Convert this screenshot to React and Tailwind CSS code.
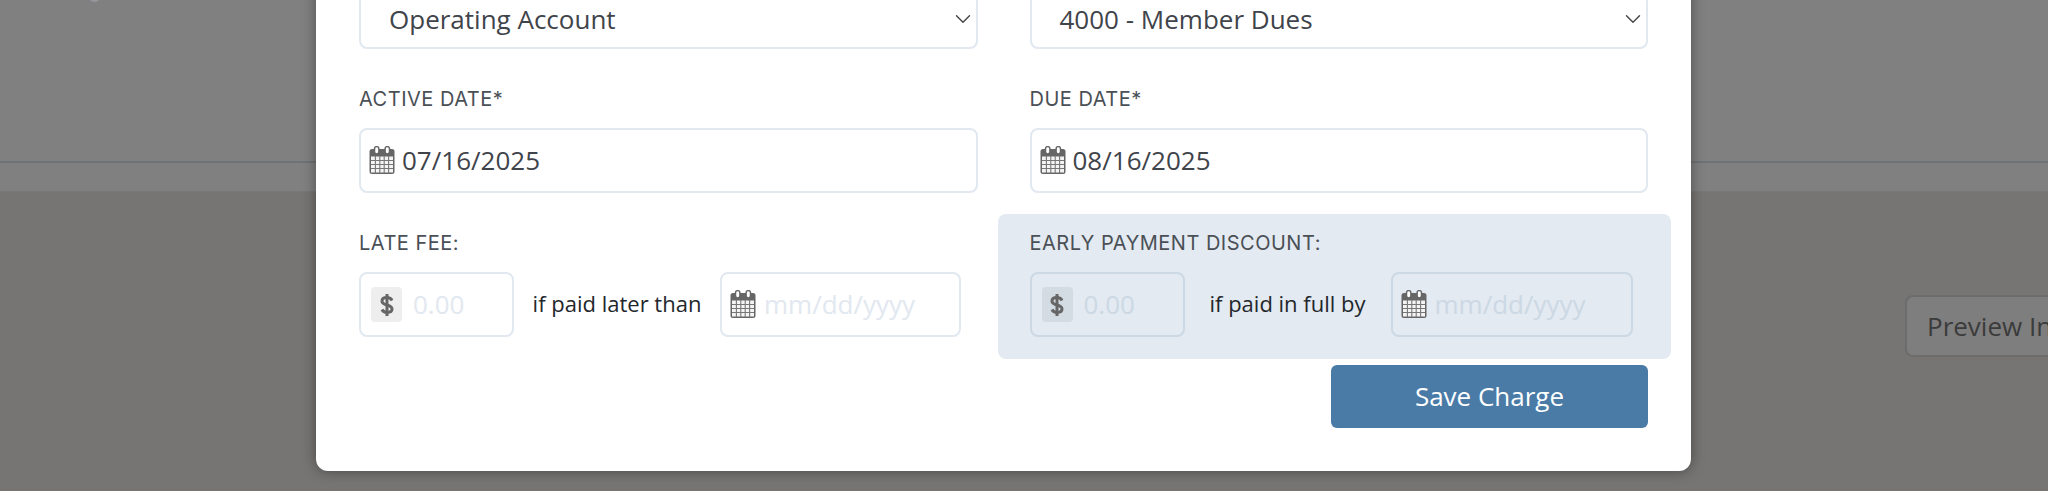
import React from "react";
import { LuChevronDown } from "react-icons/lu";

const sans = "font-['Open_Sans',sans-serif]";
const label = "font-['Inter',sans-serif] text-[20px] leading-[24px] text-[#4a5056] tracking-[0.5px]";

function CalendarIcon() {
  return (
    <svg width="26" height="28" viewBox="0 0 26 28" className="shrink-0 -mt-[2px]" fill="none">
      <rect x="0.5" y="3" width="25" height="25" rx="2.5" fill="#666" />
      <rect x="2" y="10.5" width="22" height="16" fill="#f4f4f4" />
      <path d="M6.4 10v17M10.8 10v17M15.2 10v17M19.6 10v17M2 14.5h22M2 18.5h22M2 22.5h22" stroke="#777" strokeWidth="1.1" />
      <rect x="5.5" y="0.6" width="4.4" height="7.4" rx="2.2" fill="#fff" stroke="#666" strokeWidth="1.5" />
      <rect x="16.1" y="0.6" width="4.4" height="7.4" rx="2.2" fill="#fff" stroke="#666" strokeWidth="1.5" />
    </svg>
  );
}

function DollarIcon() {
  return (
    <svg width="14" height="24" viewBox="0 0 14 24" fill="none" stroke="#666" strokeWidth="3">
      <path d="M12 7.5C11 5.5 9.2 4.6 7 4.6C4 4.6 2 6 2 8.2C2 10.6 4.5 11.3 7 12C9.5 12.7 12 13.5 12 16C12 18.1 10 19.4 7 19.4C4.8 19.4 3 18.5 2 16.5" />
      <path d="M7 1V23" />
    </svg>
  );
}

function SelectBox({ text }) {
  return (
    <div className={`h-[65px] border-2 border-[#e2e8f0] rounded-lg bg-white flex items-center justify-between pt-[5px] pl-[28px] text-[26px] leading-[32px] text-[#3f444b] ${sans}`}>
      <span>{text}</span>
      <LuChevronDown size={26} color="#444" strokeWidth={1.3} />
    </div>
  );
}

function DateValue({ value }) {
  return (
    <div className={`h-[65px] border-2 border-[#e2e8f0] rounded-lg bg-white flex items-center gap-[7px] pl-[8px] text-[26px] text-[#3f444b] ${sans}`}>
      <CalendarIcon />
      <span>{value}</span>
    </div>
  );
}

function FeeRow({ text, tinted, textW, dateW }) {
  const box = tinted ? "border-[#ccd8e4]" : "border-[#e2e8f0]";
  const ph = tinted ? "text-[#ccd8e4]" : "text-[#e2e8f0]";
  const badge = tinted ? "bg-[#d3dbe3]" : "bg-[#eeeeee]";
  return (
    <div className={`flex items-center ${sans}`}>
      <div className={`w-[155px] h-[65px] border-2 ${box} rounded-lg flex items-center pl-[10px]`}>
        <span className={`w-[31px] h-[35px] rounded flex items-center justify-center ${badge}`}>
          <DollarIcon />
        </span>
        <span className={`ml-[11px] text-[26px] ${ph}`}>0.00</span>
      </div>
      <span className={`text-[22px] text-[#23272b] text-center -mt-[2px] ${textW}`}>{text}</span>
      <div className={`h-[65px] border-2 ${box} rounded-lg flex items-center gap-[8px] pl-[8px] ${dateW}`}>
        <CalendarIcon />
        <span className={`text-[26px] ${ph}`}>mm/dd/yyyy</span>
      </div>
    </div>
  );
}

export default function App() {
  return (
    <div className="relative h-[491px] overflow-hidden bg-[#767573]">
      {/* page behind the overlay */}
      <div className="h-[192px] bg-[#808080] border-b border-[#787878]">
        <div className="h-[161px]" />
        <div className="h-[2px] bg-[#6f7377]" />
      </div>
      <div className="flex justify-end pt-[103px]">
        <div className={`w-[144px] h-[62px] -mr-px border-2 border-r-0 border-[#6c6c6c] rounded-l-lg bg-[#7e7e7e] pl-[20px] flex items-center whitespace-nowrap overflow-hidden text-[26px] text-[#3b3b3b] ${sans}`}>
          Preview Invoice
        </div>
      </div>
      <div className="absolute left-[88px] -top-[11px] w-[13px] h-[13px] rounded-full border-2 border-[#94979b]" />

      {/* modal */}
      <div className="absolute left-[316px] -top-[36px] w-[1375px] h-[507px] bg-white rounded-b-xl shadow-[0_0_14px_rgba(0,0,0,0.4)] pt-[20px] pl-[43px] pr-[43px]">
        <div className="grid grid-cols-2 gap-x-[52px]">
          <SelectBox text="Operating Account" />
          <SelectBox text="4000 - Member Dues" />
          <div className={`${label} mt-[38px] mb-[17px]`}>ACTIVE DATE*</div>
          <div className={`${label} mt-[38px] mb-[17px]`}>DUE DATE*</div>
          <DateValue value="07/16/2025" />
          <DateValue value="08/16/2025" />
          <div className="pt-[38px]">
            <div className={`${label} mb-[17px]`}>LATE FEE:</div>
            <FeeRow text="if paid later than" textW="w-[206px]" dateW="w-[241px]" />
          </div>
          <div className="mt-[21px] -ml-[32px] -mr-[23px] h-[145px] bg-[#e3eaf1] rounded-lg pt-[17px] pl-[32px]">
            <div className={`${label} mb-[17px]`}>EARLY PAYMENT DISCOUNT:</div>
            <FeeRow text="if paid in full by" tinted textW="w-[206px]" dateW="w-[242px]" />
          </div>
        </div>
        <div className="flex justify-end mt-[6px]">
          <button className={`w-[317px] h-[63px] rounded-md bg-[#4a7ba7] text-white text-[26px] ${sans}`}>
            Save Charge
          </button>
        </div>
      </div>
    </div>
  );
}
